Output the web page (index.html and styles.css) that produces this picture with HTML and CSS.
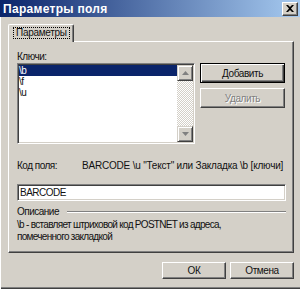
FILE: index.html
```html
<!DOCTYPE html>
<html lang="ru">
<head>
    <meta charset="UTF-8">
    <title>Параметры поля</title>
    <link rel="stylesheet" href="styles.css">
</head>
<body>
    <div class="window">
        <div class="titlebar">
            <span class="title">Параметры поля</span>
            <button class="close-btn">
                <svg width="8" height="7" viewBox="0 0 8 7"><path d="M0 0h2l2 2 2-2h2L5 3.5 8 7H6L4 5 2 7H0l3-3.5z" fill="#000"/></svg>
            </button>
        </div>

        <div class="dialog">
            <div class="tabs">
                <div class="tab"><span class="tab-label">Параметры</span></div>
            </div>

            <div class="panel">
                <div class="label">Ключи:</div>
                <div class="keys-row">
                    <div class="listbox">
                        <ul class="list">
                            <li class="selected">\b</li>
                            <li>\f</li>
                            <li>\u</li>
                        </ul>
                        <div class="scrollbar">
                            <div class="sb-btn">
                                <svg width="7" height="4" viewBox="0 0 7 4"><path d="M3.5 0L7 4H0z" fill="#808080"/></svg>
                            </div>
                            <div class="sb-track"></div>
                            <div class="sb-btn">
                                <svg width="7" height="4" viewBox="0 0 7 4"><path d="M0 0h7L3.5 4z" fill="#808080"/></svg>
                            </div>
                        </div>
                    </div>
                    <div class="side-buttons">
                        <button class="btn btn-default">Добавить</button>
                        <button class="btn" disabled>Удалить</button>
                    </div>
                </div>

                <div class="field-code">
                    <span>Код поля:</span>
                    <span class="code-value">BARCODE \u "Текст" или Закладка \b [ключи]</span>
                </div>

                <div class="input">BARCODE</div>

                <div class="group-title">
                    <span>Описание</span>
                    <span class="etch"></span>
                </div>
                <p class="desc">\b - вставляет штриховой код POSTNET из адреса,<br>помеченного закладкой</p>
            </div>

            <div class="footer">
                <button class="btn btn-small">ОК</button>
                <button class="btn btn-small">Отмена</button>
            </div>
        </div>
    </div>
</body>
</html>
```

FILE: styles.css
```css
* {
    box-sizing: border-box;
}

body {
    margin: 0;
    padding: 0;
    font-family: "Liberation Sans", Arial, sans-serif;
    font-size: 10px;
    color: #111;
}

.window {
    width: 300px;
    height: 289px;
    background-color: #d4d0c8;
    display: flex;
    flex-direction: column;
    box-shadow: inset 1px 0 #fff, inset 0 -1px #404040, inset 0 -2px #808080;
}

.titlebar {
    height: 17px;
    display: flex;
    align-items: center;
    justify-content: space-between;
    padding: 0 2px 0 3px;
    background: linear-gradient(to right, #0a246a, #a6caf0);
}

.title {
    color: #fff;
    font-weight: bold;
    font-size: 12px;
    letter-spacing: 0.3px;
}

.close-btn {
    width: 16px;
    height: 14px;
    padding: 0;
    display: flex;
    align-items: center;
    justify-content: center;
    background-color: #d4d0c8;
    border: 1px solid;
    border-color: #fff #404040 #404040 #fff;
    box-shadow: inset -1px -1px #808080;
}

.dialog {
    flex: 1;
    padding: 7px 6px 0 8px;
    display: flex;
    flex-direction: column;
}

.tabs {
    display: flex;
}

.tab {
    position: relative;
    z-index: 1;
    width: 66px;
    height: 18px;
    margin-bottom: -1px;
    padding: 2px 0 0 4px;
    background-color: #d4d0c8;
    border-top: 1px solid #fff;
    border-left: 1px solid #fff;
    border-right: 1px solid #404040;
    border-radius: 2px 2px 0 0;
    box-shadow: inset -1px 0 #808080;
}

.tab-label {
    display: inline-block;
    padding: 0 2px;
    line-height: 10px;
    border: 1px dotted #000;
    letter-spacing: -0.3px;
}

.panel {
    width: 286px;
    height: 212px;
    padding: 8px 7px 0 8px;
    border: 1px solid;
    border-color: #fff #404040 #404040 #fff;
    box-shadow: inset -1px -1px #808080;
    letter-spacing: -0.5px;
}

.label {
    line-height: 13px;
}

.keys-row {
    display: flex;
    gap: 5px;
}

.listbox {
    width: 178px;
    height: 81px;
    display: flex;
    padding: 1px;
    background-color: #fff;
    border: 1px solid;
    border-color: #808080 #fff #fff #808080;
    box-shadow: inset 1px 1px #404040, inset -1px -1px #d4d0c8;
}

.list {
    flex: 1;
    margin: 0;
    padding: 0;
    list-style: none;
}

.list li {
    height: 11px;
    line-height: 11px;
}

.list .selected {
    background-color: #0a246a;
    color: #fff;
}

.scrollbar {
    width: 16px;
    display: flex;
    flex-direction: column;
}

.sb-btn {
    height: 16px;
    display: flex;
    align-items: center;
    justify-content: center;
    background-color: #d4d0c8;
    border: 1px solid;
    border-color: #d4d0c8 #404040 #404040 #d4d0c8;
    box-shadow: inset 1px 1px #fff, inset -1px -1px #808080;
}

.sb-track {
    flex: 1;
    background-color: #fff;
    background-image: conic-gradient(#d4d0c8 25%, #fff 0 50%, #d4d0c8 0 75%, #fff 0);
    background-size: 2px 2px;
}

.side-buttons {
    display: flex;
    flex-direction: column;
    gap: 5px;
}

.btn {
    font-family: inherit;
    font-size: 10px;
    letter-spacing: -0.4px;
    color: #111;
    width: 85px;
    height: 20px;
    padding: 0;
    background-color: #d4d0c8;
    border: 1px solid;
    border-color: #fff #404040 #404040 #fff;
    box-shadow: inset -1px -1px #808080;
}

.btn-default {
    border-color: #000;
    box-shadow: inset 1px 1px #fff, inset -1px -1px #404040, inset -2px -2px #808080;
}

.btn:disabled {
    color: #808080;
    text-shadow: 1px 1px #fff;
}

.btn-small {
    width: 64px;
    height: 17px;
}

.field-code {
    display: grid;
    grid-template-columns: 65px 1fr;
    margin-top: 15px;
    line-height: 13px;
}

.code-value {
    letter-spacing: -0.2px;
}

.input {
    margin-top: 12px;
    width: 269px;
    height: 17px;
    padding: 1px 2px;
    line-height: 13px;
    background-color: #fff;
    border: 1px solid;
    border-color: #808080 #fff #fff #808080;
    box-shadow: inset 1px 1px #404040, inset -1px -1px #d4d0c8;
}

.group-title {
    display: flex;
    align-items: center;
    width: 269px;
    margin-top: 4px;
    line-height: 13px;
}

.etch {
    flex: 1;
    height: 2px;
    margin-left: 8px;
    border-top: 1px solid #808080;
    border-bottom: 1px solid #fff;
}

.desc {
    margin: 1px 0 0;
    line-height: 12px;
    letter-spacing: -0.7px;
}

.footer {
    display: flex;
    justify-content: flex-end;
    gap: 4px;
    margin-top: 9px;
}
```
